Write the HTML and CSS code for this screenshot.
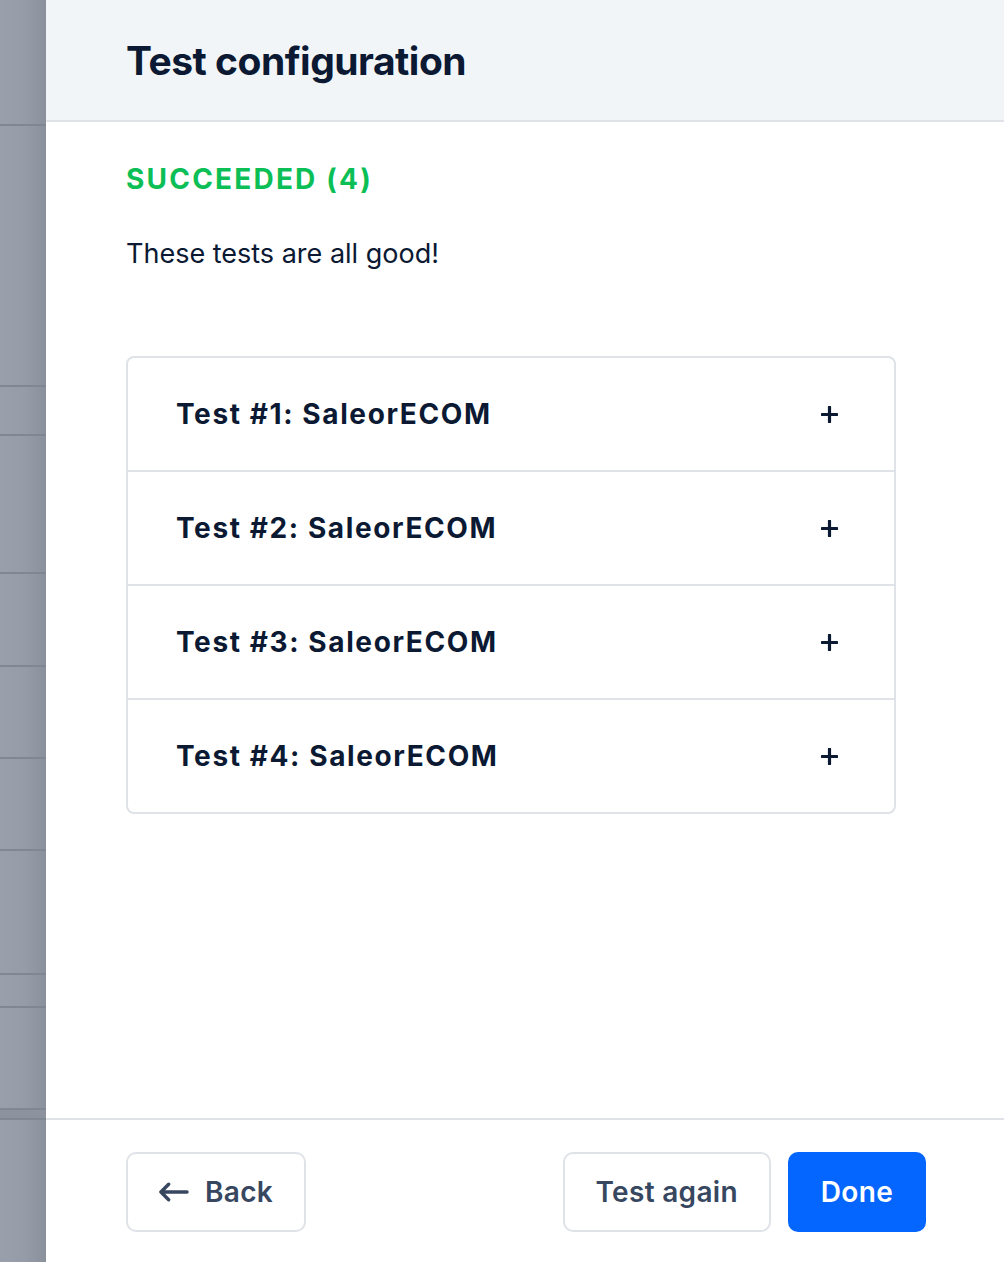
FILE: index.html
```html
<!DOCTYPE html>
<html>
<head>
<meta charset="utf-8">
<link rel="stylesheet" href="styles.css">
</head>
<body>
<div class="page">
  <div class="backdrop">
    <div class="bd-row r1"></div>
    <div class="bd-row r2"></div>
    <div class="bd-row r3"></div>
    <div class="bd-row r4"></div>
    <div class="bd-row r5"></div>
    <div class="bd-row r6"></div>
    <div class="bd-row r7"></div>
    <div class="bd-row r8"></div>
    <div class="bd-row r9"></div>
    <div class="bd-row r10"></div>
    <div class="bd-band"></div>
  </div>
  <div class="panel">
    <header class="panel-header">
      <h1 class="title">Test configuration</h1>
    </header>
    <main class="panel-body">
      <div class="status">SUCCEEDED (4)</div>
      <p class="status-text">These tests are all good!</p>
      <div class="tests">
        <div class="test-row"><span class="test-name">Test #1: SaleorECOM</span><svg class="plus" viewBox="0 0 16 16"><path d="M8 1v14M1 8h14"/></svg></div>
        <div class="test-row"><span class="test-name">Test #2: SaleorECOM</span><svg class="plus" viewBox="0 0 16 16"><path d="M8 1v14M1 8h14"/></svg></div>
        <div class="test-row"><span class="test-name">Test #3: SaleorECOM</span><svg class="plus" viewBox="0 0 16 16"><path d="M8 1v14M1 8h14"/></svg></div>
        <div class="test-row"><span class="test-name">Test #4: SaleorECOM</span><svg class="plus" viewBox="0 0 16 16"><path d="M8 1v14M1 8h14"/></svg></div>
      </div>
    </main>
    <footer class="panel-footer">
      <button class="btn btn-outline btn-back"><svg class="arrow" viewBox="0 0 32 20"><path d="M30 10H3M11 2L3 10l8 8"/></svg>Back</button>
      <div class="footer-right">
        <button class="btn btn-outline">Test again</button>
        <button class="btn btn-primary">Done</button>
      </div>
    </footer>
  </div>
</div>
</body>
</html>
```
FILE: styles.css
```css
* { box-sizing: border-box; }
html, body { margin: 0; padding: 0; }
body {
  font-family: Inter, "Noto Sans", "Liberation Sans", sans-serif;
  color: #0b1933;
  background: #fff;
}
.page {
  display: flex;
  width: 1004px;
  height: 1262px;
  overflow: hidden;
}
.backdrop {
  width: 46px;
  flex: none;
  background: linear-gradient(90deg, #99a0ab 0%, #959ca7 55%, #8a919c 100%);
  display: flex;
  flex-direction: column;
}
.bd-row { border-bottom: 2px solid #7f8793; flex: none; }
.r1 { height: 126px; }
.r2 { height: 261px; }
.r3 { height: 49px; }
.r4 { height: 138px; }
.r5 { height: 93px; }
.r6 { height: 92px; }
.r7 { height: 92px; }
.r8 { height: 124px; }
.r9 { height: 33px; }
.r10 { height: 102px; }
.bd-band { height: 10px; background: #8c939e; border-bottom: 2px solid #7f8793; }

.panel {
  flex: 1;
  display: flex;
  flex-direction: column;
  background: #fff;
}
.panel-header {
  height: 122px;
  background: #f2f5f8;
  border-bottom: 2px solid #dfe3e8;
  padding: 0 80px;
  display: flex;
  align-items: center;
}
.title {
  margin: 0;
  font-size: 39px;
  font-weight: 700;
  letter-spacing: -0.5px;
  color: #0b1933;
}
.panel-body {
  flex: 1;
  padding: 39px 108px 0 80px;
}
.status {
  color: #0bbf56;
  font-size: 28px;
  font-weight: 700;
  line-height: 36px;
  letter-spacing: 2.2px;
}
.status-text {
  margin: 41px 0 0;
  font-size: 27px;
  font-weight: 400;
  line-height: 32px;
  color: #0b1933;
}
.tests {
  margin-top: 86px;
  border: 2px solid #dfe3e8;
  border-radius: 8px;
  width: 770px;
}
.test-row {
  height: 114px;
  display: flex;
  align-items: center;
  justify-content: space-between;
  padding: 0 56px 0 48px;
  border-bottom: 2px solid #dfe3e8;
}
.test-row:last-child { border-bottom: none; height: 112px; }
.test-name {
  font-size: 28px;
  font-weight: 700;
  letter-spacing: 1.6px;
  color: #0b1933;
}
.plus {
  width: 17px;
  height: 17px;
  fill: none;
  stroke: #0b1933;
  stroke-width: 3;
  stroke-linecap: round;
}
.panel-footer {
  height: 144px;
  border-top: 2px solid #dfe3e8;
  padding: 32px 78px 0 80px;
  display: flex;
  justify-content: space-between;
  align-items: flex-start;
}
.footer-right { display: flex; gap: 17px; }
.btn {
  height: 80px;
  border-radius: 10px;
  font-family: inherit;
  font-size: 28px;
  font-weight: 600;
  letter-spacing: 0.3px;
  padding: 0 31px;
  display: flex;
  align-items: center;
  cursor: pointer;
}
.btn-outline {
  background: #fff;
  border: 2px solid #dfe3e8;
  color: #37475f;
}
.btn-back { gap: 16px; padding: 0 31px 0 30px; }
.arrow {
  width: 31px;
  height: 20px;
  fill: none;
  stroke: #37475f;
  stroke-width: 3.5;
  stroke-linecap: round;
  stroke-linejoin: round;
}
.btn-primary {
  background: #0466ff;
  border: 2px solid #0466ff;
  color: #fff;
}
```
